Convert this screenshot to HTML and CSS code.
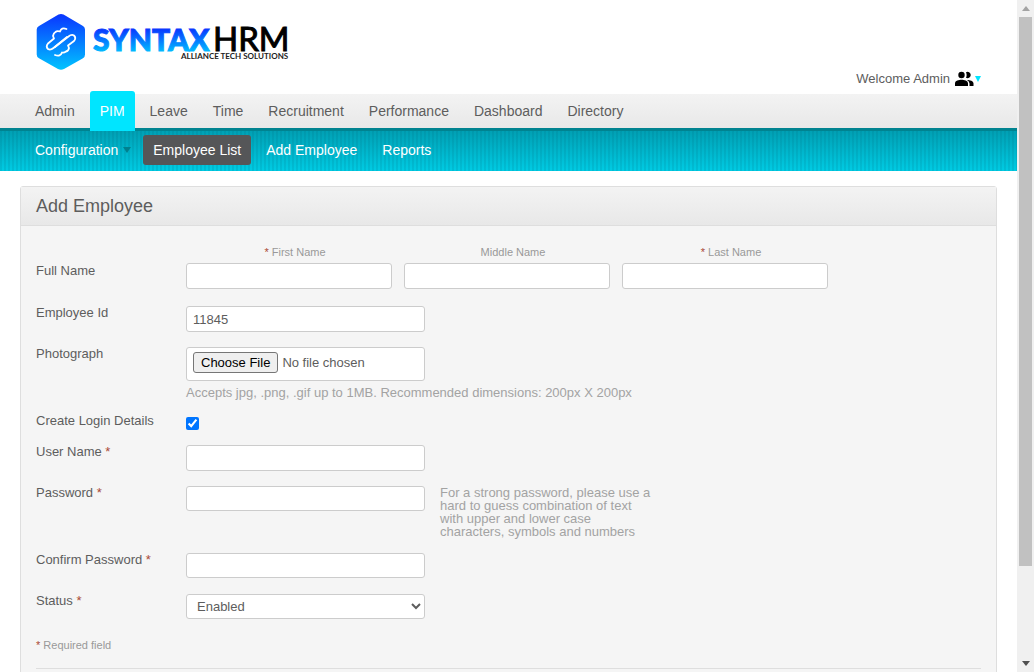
FILE: index.html
```html
<!DOCTYPE html>
<html lang="en">
<head>
<meta charset="utf-8">
<title>Add Employee - SyntaxHRM</title>
<link rel="stylesheet" href="styles.css">
</head>
<body>
<div class="window">
  <div class="page">
    <header class="branding">
      <svg class="logo" viewBox="0 0 260 60" role="img" aria-label="SyntaxHRM, Alliance Tech Solutions">
        <defs>
          <linearGradient id="hex" x1="0" y1="0" x2="0" y2="1"><stop offset="0" stop-color="#0a35ff"/><stop offset="1" stop-color="#00c4ff"/></linearGradient>
          <linearGradient id="word" x1="0" y1="17" x2="0" y2="41" gradientUnits="userSpaceOnUse"><stop offset="0" stop-color="#0a2cff"/><stop offset="1" stop-color="#00b8ff"/></linearGradient>
        </defs>
        <path d="M22.500 4.500Q25 3.300 27.500 4.500L47 16Q49 17.200 49 19.500V44.500Q49 47 47 48.200L28 59Q25 60.500 22 59L3 48.200Q.7 47 .7 44.500V19.500Q.7 17.200 3 16Z" fill="url(#hex)"/>
        <g fill="none" stroke="#fff" stroke-width="1.800" stroke-linecap="round" stroke-linejoin="round">
          <path d="M30.500 19C27 17.500 25 18.500 24 21.500Q21 20.500 19.500 22Q17.500 23 17 26L18 28.500L12 33.500Q9.500 36.500 12 39Q14.500 40.500 17.500 38L31 27"/>
          <path d="M19 45C22.500 46.500 25 45.500 26 42.500Q28 43 30 41.500Q32.500 41 33 38L32 35.500L38 31Q40.500 28 38 25.500Q35.500 24 32.500 26.500L19 37"/>
        </g>
        <text class="logo-syntax" x="57" y="41" fill="url(#word)" stroke="url(#word)">SYNTAX</text>
        <text class="logo-hrm" x="177" y="41">HRM</text>
        <text class="logo-tagline" x="145" y="49">ALLIANCE TECH SOLUTIONS</text>
      </svg>
      <button class="welcome" type="button">
        <span>Welcome Admin</span>
        <svg class="people" viewBox="0 0 20 16" aria-hidden="true"><path d="M6.500.8a3.200 3.200 0 1 1 0 6.400a3.200 3.200 0 0 1 0-6.400M0 15v-2.500C0 9.500 4 8.800 6.500 8.800S13 9.500 13 12.500V15ZM11 1.200A3.200 3.200 0 1 1 11 6.800Q12.300 4 11 1.200M12 8.900C15 8.900 18.500 10 18.500 12.500V15H14.500V12.500Q14.300 10 12 8.900"/></svg>
        <span class="welcome-arrow"></span>
      </button>
    </header>
    <nav class="menu" aria-label="Main">
      <a href="#">Admin</a>
      <a class="current" href="#">PIM</a>
      <a href="#">Leave</a>
      <a href="#">Time</a>
      <a href="#">Recruitment</a>
      <a href="#">Performance</a>
      <a href="#">Dashboard</a>
      <a href="#">Directory</a>
    </nav>
    <nav class="submenu" aria-label="PIM">
      <a href="#">Configuration<span class="submenu-arrow"></span></a>
      <a class="selected" href="#">Employee List</a>
      <a href="#">Add Employee</a>
      <a href="#">Reports</a>
    </nav>
    <main class="panel">
      <h1>Add Employee</h1>
      <form class="form">
        <div class="row name-row">
          <span class="label">Full Name</span>
          <div class="names">
            <div class="name"><label for="first"><em>*</em> First Name</label><input class="field" id="first" type="text"></div>
            <div class="name"><label for="middle">Middle Name</label><input class="field" id="middle" type="text"></div>
            <div class="name"><label for="last"><em>*</em> Last Name</label><input class="field" id="last" type="text"></div>
          </div>
        </div>
        <div class="row">
          <label class="label" for="empid">Employee Id</label>
          <input class="field" id="empid" type="text" value="11845">
        </div>
        <div class="row">
          <label class="label" for="photo">Photograph</label>
          <div class="photo">
            <input class="field file" id="photo" type="file">
            <p class="hint">Accepts jpg, .png, .gif up to 1MB. Recommended dimensions: 200px X 200px</p>
          </div>
        </div>
        <div class="row">
          <label class="label" for="login">Create Login Details</label>
          <input class="check" id="login" type="checkbox" checked>
        </div>
        <div class="row">
          <label class="label" for="user">User Name <em>*</em></label>
          <input class="field" id="user" type="text">
        </div>
        <div class="row">
          <label class="label" for="pass">Password <em>*</em></label>
          <input class="field" id="pass" type="password">
          <p class="hint side-hint">For a strong password, please use a hard to guess combination of text with upper and lower case characters, symbols and numbers</p>
        </div>
        <div class="row confirm-row">
          <label class="label" for="confirm">Confirm Password <em>*</em></label>
          <input class="field" id="confirm" type="password">
        </div>
        <div class="row">
          <label class="label" for="status">Status <em>*</em></label>
          <select class="field" id="status"><option>Enabled</option><option>Disabled</option></select>
        </div>
        <p class="required"><em>*</em> Required field</p>
      </form>
    </main>
  </div>
  <div class="scrollbar" aria-hidden="true">
    <span class="scroll-up"></span>
    <div class="track"><div class="thumb"></div></div>
    <span class="scroll-down"></span>
  </div>
</div>
</body>
</html>
```
FILE: styles.css
```css
* { box-sizing: border-box; }

body {
  margin: 0;
  background: #fff;
  color: #5d5d5d;
  font: 13px/12px "Liberation Sans", Arial, sans-serif;
}

a { color: inherit; text-decoration: none; }
p, h1 { margin: 0; }
em { color: #aa4935; font-style: normal; }

.window {
  display: grid;
  grid-template-columns: 1fr 17px;
  height: 100vh;
}

.page { min-width: 0; overflow: hidden; }

/* Branding */
.branding {
  display: flex;
  justify-content: space-between;
  align-items: flex-end;
  height: 94px;
  padding: 0 36px 7px;
}
.logo { width: 260px; height: 60px; align-self: flex-start; margin-top: 10px; overflow: visible; }
.logo-syntax { font: 900 30px Lato, sans-serif; stroke-width: 1px; }
.logo-hrm { font: 400 33px Lato, sans-serif; stroke: #000; stroke-width: 1px; }
.logo-tagline { font: 700 8px Lato, sans-serif; fill: #222; }
.welcome {
  display: flex;
  align-items: center;
  padding: 0;
  border: 0;
  background: none;
  color: #5d5d5d;
  font: 13px/16px "Liberation Sans", Arial, sans-serif;
}
.people { width: 20px; height: 16px; margin-left: 5px; }
.welcome-arrow {
  border: 3px solid transparent;
  border-top: 6px solid #00e5ff;
  border-bottom: 0;
}

/* Menus */
.menu {
  display: flex;
  align-items: flex-end;
  gap: 5px;
  height: 34px;
  padding-left: 25px;
  background: linear-gradient(#f3f3f3, #e8e8e8);
  font-size: 14px;
}
.menu a { padding: 0 10px; line-height: 34px; }
.menu .current {
  position: relative;
  margin-bottom: -3px;
  padding-bottom: 3px;
  padding-top: 3px;
  border-radius: 3px 3px 0 0;
  background: #00e5ff;
  color: #fff;
}
.submenu {
  display: flex;
  align-items: center;
  gap: 5px;
  height: 43px;
  padding-left: 25px;
  border-top: 3px solid #008390;
  background:
    repeating-linear-gradient(90deg, rgba(0, 90, 110, .12) 0 2px, transparent 2px 4px),
    linear-gradient(#00a0b4, #00cbe3);
  color: #fff;
  font-size: 14px;
}
.submenu a { display: flex; align-items: center; margin-bottom: 2px; padding: 0 10px; border-radius: 3px; line-height: 30px; }
.submenu .selected { background: #555658; }
.submenu-arrow {
  margin: 0 -3px 0 5px;
  border: 4px solid transparent;
  border-top: 6px solid #00808e;
  border-bottom: 0;
}

/* Panel */
.panel {
  margin: 15px 20px 20px;
  border: 1px solid #dedede;
  border-radius: 3px;
  background: #f5f5f5;
}
h1 {
  padding-left: 15px;
  border-bottom: 1px solid #dedede;
  background: linear-gradient(#f3f3f3, #e8e8e8);
  font-size: 18px;
  font-weight: 400;
  line-height: 38px;
}
.form { display: grid; gap: 15px; padding: 20px 15px 60px; }
.row { display: flex; align-items: flex-start; }
.label { flex: 0 0 150px; line-height: 14px; }
.names { display: flex; gap: 12px; }
.name { display: grid; gap: 5px; width: 206px; text-align: center; font-size: 11px; color: #999; }
.name label { padding-left: 12px; }
.name-row { padding-bottom: 2px; }
.name-row .label { padding-top: 18px; }
.confirm-row { padding-bottom: 1px; }
.field {
  width: 239px;
  height: 26px;
  margin: 0;
  padding: 0 6px;
  border: 1px solid #ccc;
  border-radius: 3px;
  background: #fff;
  color: #5d5d5d;
  font: 13px "Liberation Sans", Arial, sans-serif;
}
.field[type="password"], select.field { height: 25px; }
.name .field { width: 100%; }
.file { display: block; height: 34px; padding: 4px 6px; }
.file::file-selector-button {
  height: 21px;
  margin-right: 4px;
  padding: 0 7px;
  border: 1px solid #767676;
  border-radius: 3px;
  background: #efefef;
  color: #000;
  font: 13px "Liberation Sans", Arial, sans-serif;
}
.check { width: 13px; height: 13px; margin: 3px 0 0; }
.hint { color: #a3a3a3; font-size: 13px; line-height: 13px; }
.photo .hint { margin-top: 5px; }
.side-hint { width: 215px; margin-left: 15px; }
.required {
  padding: 5px 0 17px;
  border-bottom: 1px solid #dedede;
  color: #999;
  font-size: 11px;
}

/* Scrollbar */
.scrollbar { display: flex; flex-direction: column; align-items: center; background: #f0f0f0; }
.track { flex: 1; width: 13px; }
.thumb { height: 86%; background: #c1c1c1; }
.scroll-up, .scroll-down { margin: 6px 0; border: 4px solid transparent; }
.scroll-up { border-top: 0; border-bottom: 5px solid #a3a3a3; }
.scroll-down { border-bottom: 0; border-top: 5px solid #505050; }
```
